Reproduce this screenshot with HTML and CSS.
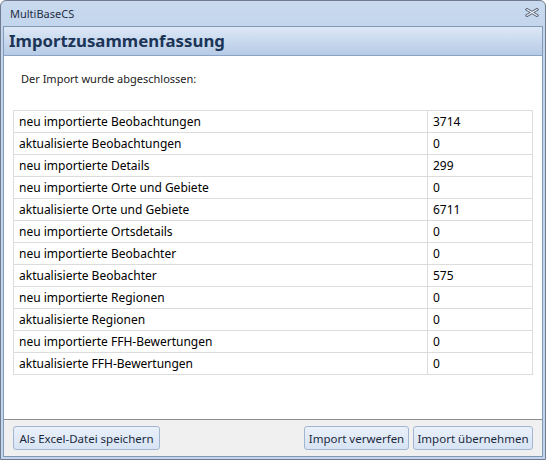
FILE: index.html
```html
<!DOCTYPE html>
<html lang="de">
<head>
<meta charset="utf-8">
<title>MultiBaseCS</title>
<link rel="stylesheet" href="styles.css">
</head>
<body>
<div class="window">
  <div class="titlebar">
    <span class="title">MultiBaseCS</span>
    <svg class="close" width="14" height="9" viewBox="0 0 14 9">
      <path d="M2 1.5 L12 7.5 M12 1.5 L2 7.5" stroke="#5b6475" stroke-width="3" stroke-linecap="square" fill="none"/>
      <path d="M2 1.5 L12 7.5 M12 1.5 L2 7.5" stroke="#eef2f8" stroke-width="1.1" stroke-linecap="square" fill="none"/>
    </svg>
  </div>
  <div class="client">
    <div class="header">Importzusammenfassung</div>
    <div class="content">
      <p class="intro">Der Import wurde abgeschlossen:</p>
      <table class="summary">
        <tr><td class="label">neu importierte Beobachtungen</td><td class="value">3714</td></tr>
        <tr><td class="label">aktualisierte Beobachtungen</td><td class="value">0</td></tr>
        <tr><td class="label">neu importierte Details</td><td class="value">299</td></tr>
        <tr><td class="label">neu importierte Orte und Gebiete</td><td class="value">0</td></tr>
        <tr><td class="label">aktualisierte Orte und Gebiete</td><td class="value">6711</td></tr>
        <tr><td class="label">neu importierte Ortsdetails</td><td class="value">0</td></tr>
        <tr><td class="label">neu importierte Beobachter</td><td class="value">0</td></tr>
        <tr><td class="label">aktualisierte Beobachter</td><td class="value">575</td></tr>
        <tr><td class="label">neu importierte Regionen</td><td class="value">0</td></tr>
        <tr><td class="label">aktualisierte Regionen</td><td class="value">0</td></tr>
        <tr><td class="label">neu importierte FFH-Bewertungen</td><td class="value">0</td></tr>
        <tr><td class="label">aktualisierte FFH-Bewertungen</td><td class="value">0</td></tr>
      </table>
    </div>
    <div class="footer">
      <button class="btn btn-excel">Als Excel-Datei speichern</button>
      <div class="spacer"></div>
      <button class="btn btn-discard">Import verwerfen</button>
      <button class="btn btn-accept">Import übernehmen</button>
    </div>
  </div>
</div>
</body>
</html>
```
FILE: styles.css
```css
html, body {
  margin: 0;
  padding: 0;
  background: #ffffff;
}
body {
  font-family: "Noto Sans", "Open Sans", sans-serif;
  font-size: 12px;
  color: #000;
}
.window {
  box-sizing: border-box;
  width: 546px;
  height: 460px;
  border: 1px solid #6f7b8f;
  border-radius: 6px 6px 0 0;
  background: linear-gradient(#c9daef, #c2d5ec 30px, #c2d5ec);
  padding: 0 2px 2px 2px;
  display: flex;
  flex-direction: column;
}
.titlebar {
  height: 25px;
  display: flex;
  align-items: center;
  padding-left: 7px;
  padding-right: 4px;
}
.title {
  flex: 1;
  font-size: 11px;
  color: #1f2d44;
}
.close {
  display: block;
  margin-top: -2px;
}
.client {
  flex: 1;
  display: flex;
  flex-direction: column;
  background: #ffffff;
  border: 1px solid #8399b8;
}
.header {
  height: 29px;
  box-sizing: border-box;
  border-bottom: 1px solid #8ba3c4;
  background: linear-gradient(#dde8f6, #c9d9ee 50%, #b6cbe6);
  font-size: 16.8px;
  font-weight: bold;
  color: #1c3557;
  padding-left: 5px;
  line-height: 28px;
}
.content {
  flex: 1;
  padding: 0 9px 0 9px;
}
.intro {
  margin: 15px 0 0 8px;
  font-size: 11px;
  line-height: 16px;
  color: #1a1a1a;
}
.summary {
  margin-top: 23px;
  width: 520px;
  border-collapse: collapse;
}
.summary td {
  border: 1px solid #dcdcdc;
  height: 21px;
  padding: 0 5px;
  line-height: 20px;
}
.summary td.value {
  width: 94px;
}
.footer {
  height: 37px;
  box-sizing: border-box;
  border-top: 1px solid #8d8d8d;
  background: #f0f0f0;
  display: flex;
  align-items: center;
  padding: 0 9px 0 9px;
  gap: 4px;
}
.spacer {
  flex: 1;
}
.btn {
  font-family: "Noto Sans", "Open Sans", sans-serif;
  font-size: 11.5px;
  height: 24px;
  border: 1px solid #a3b6cf;
  border-radius: 3px;
  background: linear-gradient(#e9f0fa, #d8e4f4);
  color: #1c2a3d;
  padding: 0;
  white-space: nowrap;
}
.btn-excel { width: 147px; }
.btn-discard { width: 105px; }
.btn-accept { width: 120px; }
```
